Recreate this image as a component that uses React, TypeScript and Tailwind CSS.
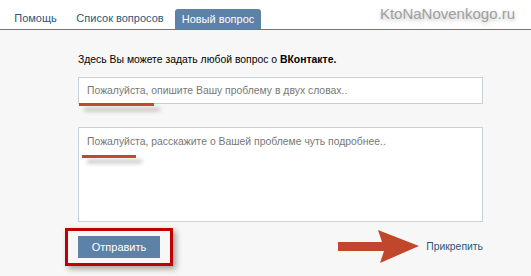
import React from 'react';

function Arrow() {
  return (
    <svg width="82" height="34" viewBox="0 0 82 34" className="block">
      <polygon
        points="0,12 44,12 40,0 81,16 42,33 46,21 0,21"
        fill="#c0472c"
      />
    </svg>
  );
}

export default function App() {
  return (
    <div className="w-[531px] h-[276px] bg-[#f7f7f7] font-['Liberation_Sans',Arial,sans-serif] text-[10.4px] overflow-hidden">
      {/* header with tabs */}
      <div className="h-[30px] bg-white border-b border-[#5b7aa3] flex items-end pl-[6px] pr-[16px]">
        <div className="w-[59px] h-[21px] flex items-center justify-center text-[#2b587a] text-[11px]">
          Помощь
        </div>
        <div className="w-[104px] ml-[3px] h-[21px] flex items-center justify-center text-[#2b587a] text-[11px]">
          Список вопросов
        </div>
        <div className="w-[86px] ml-[3px] h-[20px] flex items-center justify-center text-white text-[11px] bg-[#5e81a8] rounded-t-[3px]">
          Новый вопрос
        </div>
        <div className="ml-auto self-center text-[15px] text-[#a0a0a0] [text-shadow:0_2px_4px_rgba(0,0,0,0.25)]">
          KtoNaNovenkogo.ru
        </div>
      </div>

      <div className="pl-[78px] pr-[48px]">
        <p className="mt-[23px] text-black leading-[14px]">
          Здесь Вы можете задать любой вопрос о <b>ВКонтакте.</b>
        </p>

        {/* title input */}
        <div className="relative mt-[10px] h-[27px] bg-white border border-[#c5d0db] flex items-center pl-[8px] text-[#777]">
          Пожалуйста, опишите Вашу проблему в двух словах..
          <div className="absolute left-0 top-[25px] w-[75px] h-[3px] bg-[#c0472c]" />
          <div className="absolute left-[5px] top-[30px] w-[76px] h-[3px] bg-[#999] blur-[2px] opacity-70" />
        </div>

        {/* description textarea */}
        <div className="relative mt-[23px] h-[95px] bg-white border border-[#c5d0db] pl-[8px] pt-[6px] text-[#777]">
          Пожалуйста, расскажите о Вашей проблеме чуть подробнее..
          <div className="absolute left-[3px] top-[27px] w-[54px] h-[3px] bg-[#c0472c]" />
          <div className="absolute left-[8px] top-[32px] w-[55px] h-[3px] bg-[#999] blur-[2px] opacity-70" />
        </div>

        {/* bottom row */}
        <div className="mt-[6px] flex items-center">
          <div className="-ml-[13px] border-[3px] border-[#c00000] px-[10px] py-[5px] shadow-[3px_3px_6px_rgba(0,0,0,0.35)]">
            <button className="w-[82px] h-[22px] bg-[#5e81a8] text-white text-[11px] flex items-center justify-center">
              Отправить
            </button>
          </div>
          <div className="ml-auto flex items-center">
            <Arrow />
            <span className="ml-[6px] text-[#2b587a]">Прикрепить</span>
          </div>
        </div>
      </div>
    </div>
  );
}
